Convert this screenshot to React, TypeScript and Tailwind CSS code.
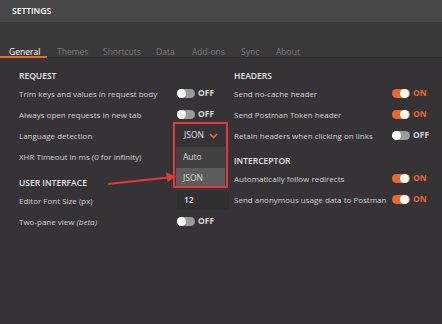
const TABS = [
  { label: 'General', cls: 'w-[47px] pl-[9px] border-[#e8692c] text-white' },
  { label: 'Themes', cls: 'ml-[10px] w-[46px] border-transparent text-[#7c7c7c]' },
  { label: 'Shortcuts', cls: 'w-[53px] border-transparent text-[#7c7c7c]' },
  { label: 'Data', cls: 'w-[36px] border-transparent text-[#7c7c7c]' },
  { label: 'Add-ons', cls: 'w-[49px] border-transparent text-[#7c7c7c]' },
  { label: 'Sync', cls: 'w-[35px] border-transparent text-[#7c7c7c]' },
  { label: 'About', cls: 'w-[40px] border-transparent text-[#7c7c7c]' },
];

function Toggle({ on }: { on: boolean }) {
  return (
    <div className="flex items-center gap-[3px]">
      <div
        className={
          on
            ? 'relative h-[9px] w-[18px] rounded-full bg-[#e8692c]'
            : 'relative h-[9px] w-[18px] rounded-full bg-[#9a9a9a]'
        }
      >
        <div
          className={
            on
              ? 'absolute right-[1px] top-[0px] h-[9px] w-[9px] rounded-full bg-white'
              : 'absolute left-[0px] top-[0px] h-[9px] w-[9px] rounded-full bg-white'
          }
        />
      </div>
      <span
        className={
          on
            ? 'text-[8.5px] font-bold text-[#e8692c]'
            : 'text-[8.5px] font-bold text-[#d8d8d8]'
        }
      >
        {on ? 'ON' : 'OFF'}
      </span>
    </div>
  );
}

function Row({ label, children }: { label: React.ReactNode; children?: React.ReactNode }) {
  return (
    <div className="flex h-[21px] items-center">
      <div className="w-[158px] shrink-0 whitespace-nowrap text-[8px] text-[#d2d2d2]">{label}</div>
      <div className="flex items-center">{children}</div>
    </div>
  );
}

function Heading({ children, className }: { children: React.ReactNode; className?: string }) {
  return (
    <div className={'flex h-[14px] items-center text-[8.5px] font-semibold text-[#e4e4e4] ' + (className ?? '')}>
      {children}
    </div>
  );
}

export default function App() {
  return (
    <div
      className="relative h-[324px] w-[442px] overflow-hidden bg-[#363337]"
      style={{ fontFamily: '"Open Sans", "Noto Sans", sans-serif' }}
    >
      <div className="flex h-[22px] items-center bg-[#474747] pl-[12px] text-[8.5px] font-semibold text-white">
        SETTINGS
      </div>
      <div className="flex h-[36px] items-end border-b border-[#2a2a2a] bg-[#393939]">
        {TABS.map((t) => (
          <div
            key={t.label}
            className={'-mb-px whitespace-nowrap border-b-2 text-[8.5px] leading-[9px] ' + t.cls}
          >
            {t.label}
          </div>
        ))}
      </div>

      <div className="flex pt-[11px]">
        <div className="w-[234px] shrink-0 pl-[19px]">
          <Heading>REQUEST</Heading>
          <Row label="Trim keys and values in request body">
            <Toggle on={false} />
          </Row>
          <Row label="Always open requests in new tab">
            <Toggle on={false} />
          </Row>
          <Row label="Language detection">
            <div className="flex items-center gap-[5px] pl-[7px] text-[8.5px] text-[#e4e4e4]">
              JSON
              <svg width="9" height="6" viewBox="0 0 9 6">
                <path d="M1 1l3.5 3.5L8 1" stroke="#e8692c" strokeWidth="1.6" fill="none" />
              </svg>
            </div>
          </Row>
          <Row label="XHR Timeout in ms (0 for infinity)" />
          <Heading className="mt-[9px]">USER INTERFACE</Heading>
          <Row label="Editor Font Size (px)">
            <div className="flex h-[19px] w-[52px] items-center bg-[#303030] pl-[7px] text-[8.5px] font-semibold text-[#e4e4e4]">
              12
            </div>
          </Row>
          <Row
            label={
              <>
                Two-pane view <i>(beta)</i>
              </>
            }
          >
            <Toggle on={false} />
          </Row>
        </div>
        <div className="flex-1">
          <Heading>HEADERS</Heading>
          <Row label="Send no-cache header">
            <Toggle on />
          </Row>
          <Row label="Send Postman Token header">
            <Toggle on />
          </Row>
          <Row label="Retain headers when clicking on links">
            <Toggle on={false} />
          </Row>
          <Heading className="mt-[8px]">INTERCEPTOR</Heading>
          <Row label="Automatically follow redirects">
            <Toggle on />
          </Row>
          <Row label="Send anonymous usage data to Postman">
            <Toggle on />
          </Row>
        </div>
      </div>

      {/* dropdown list */}
      <div className="absolute left-[176px] top-[147px] w-[49px] bg-[#414141] text-[8.5px] text-[#d8d8d8]">
        <div className="flex h-[21px] items-center pl-[7px]">Auto</div>
        <div className="flex h-[20px] items-center bg-[#5c5c5c] pl-[7px]">JSON</div>
      </div>
      {/* highlight box */}
      <div className="absolute left-[173px] top-[122px] h-[66px] w-[55px] border-2 border-[#e23a3a]" />
      {/* arrow */}
      <svg className="absolute left-0 top-0" width="442" height="324">
        <line x1="108" y1="184" x2="168" y2="177.5" stroke="#e23a3a" strokeWidth="2" />
        <path d="M176 176.5L166 172.5L167.5 182Z" fill="#e23a3a" />
      </svg>
    </div>
  );
}
